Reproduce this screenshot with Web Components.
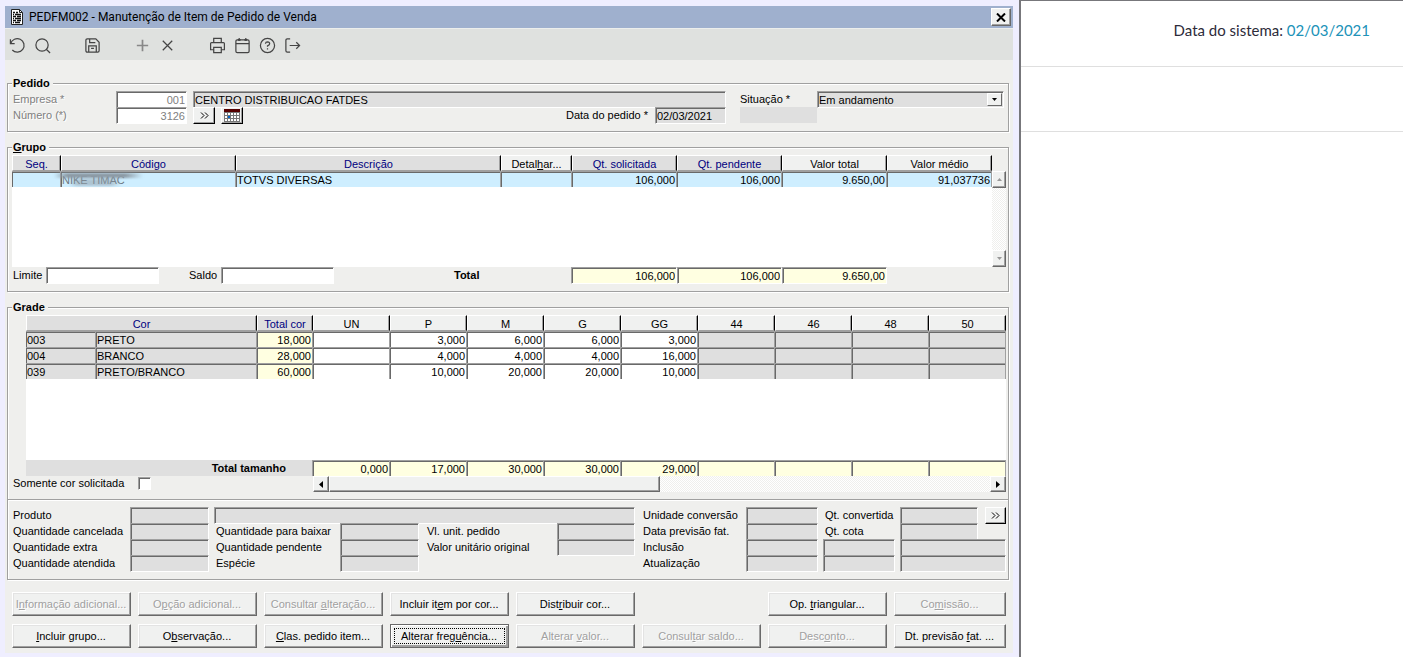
<!DOCTYPE html>
<html lang="pt-BR">
<head>
<meta charset="utf-8">
<title>PEDFM002 - Manutenção de Item de Pedido de Venda</title>
<style>
  :root {
    --frame: #efeeff;
    --face: #efefed;
    --field: #dfdfdf;
    --total: #ffffe1;
    --shadow: #a0a0a0;
    --dark: #696969;
    --navy: #000080;
  }

  body {
    margin: 0;
    min-height: 100vh;
    display: grid;
    grid-template-columns: minmax(0, 1fr) 382px;
    background: #fff;
    color: #000;
    font: 11px/16px "Liberation Sans", Arial, sans-serif;
  }
</style>
</head>
<body>
<erp-window>
  <span slot="title">PEDFM002 - Manutenção de Item de Pedido de Venda</span>
  <erp-toolbar slot="toolbar"></erp-toolbar>
  <erp-group>
    <b slot="legend">Pedido</b>
    <order-header></order-header>
  </erp-group>
  <erp-group>
    <b slot="legend"><u>G</u>rupo</b>
    <item-group-grid></item-group-grid>
  </erp-group>
  <erp-group>
    <b slot="legend">Grade</b>
    <size-grid></size-grid>
  </erp-group>
  <item-details></item-details>
  <action-bar>
    <erp-button disabled>I<u>n</u>formação adicional...</erp-button>
    <erp-button disabled>O<u>p</u>ção adicional...</erp-button>
    <erp-button disabled>Consultar <u>a</u>lteração...</erp-button>
    <erp-button>Incluir it<u>e</u>m por cor...</erp-button>
    <erp-button>Dist<u>r</u>ibuir cor...</erp-button>
    <span></span>
    <erp-button>Op. <u>t</u>riangular...</erp-button>
    <erp-button disabled>Co<u>m</u>issão...</erp-button>
    <erp-button><u>I</u>ncluir grupo...</erp-button>
    <erp-button>O<u>b</u>servação...</erp-button>
    <erp-button><u>C</u>las. pedido item...</erp-button>
    <erp-button default>Alterar freg<u>u</u>ência...</erp-button>
    <erp-button disabled>Alterar <u>v</u>alor...</erp-button>
    <erp-button disabled>Consul<u>t</u>ar saldo...</erp-button>
    <erp-button disabled>Desc<u>o</u>nto...</erp-button>
    <erp-button>Dt. previsão <u>f</u>at. ...</erp-button>
  </action-bar>
</erp-window>
<system-panel>02/03/2021</system-panel>

<script>
// form controls shared by every panel
const controls = `
  *, *::before { box-sizing: border-box; }
  label, .label { white-space: nowrap; }
  input[type=text], select {
    display: block;
    width: 100%;
    min-width: 0;
    height: 17px;
    margin: 0 0 -1px;
    padding: 1px 2px 0 1px;
    border: 1px solid;
    border-color: var(--shadow) #fff #fff var(--shadow);
    border-radius: 0;
    box-shadow: inset 1px 1px var(--dark);
    background: var(--field);
    color: inherit;
    font: inherit;
    outline: 0;
  }
  input.edit { background: #fff; }
  input.total { background: var(--total); }
  input.num { text-align: right; padding-right: 1px; }
  .small {
    height: 17px;
    margin: 0;
    padding: 0;
    border: 1px solid;
    border-color: #fff #000 #000 #fff;
    box-shadow: inset -1px -1px var(--shadow);
    background: #f0f1f0;
    display: flex;
    align-items: center;
    justify-content: center;
  }
  svg { display: block; }
`;

const grid = `
  table {
    width: 100%;
    border-collapse: separate;
    border-spacing: 0;
    table-layout: fixed;
  }
  th, td { height: 16px; padding: 0; white-space: nowrap; line-height: 14px; overflow: hidden; }
  th {
    padding-top: 2px;
    line-height: 12px;
    font-weight: normal;
    background: #f0f1f0;
    border: 1px solid;
    border-color: #fff #000 var(--shadow) #fff;
    box-shadow: inset -1px 0 var(--shadow);
  }
  th.key { background: var(--field); color: var(--navy); }
  td {
    padding: 1px 1px 0 1px;
    border: solid;
    border-width: 1px 1px 0 0;
    border-color: var(--shadow);
    box-shadow: inset 1px 1px var(--dark);
  }
  td.num { text-align: right; }
  .track { background: repeating-conic-gradient(#efefed 0 25%, #fff 0 50%) 0 0 / 2px 2px; display: flex; justify-content: space-between; }
  .arrow {
    display: flex;
    align-items: center;
    justify-content: center;
    padding: 0;
    border: 1px solid;
    border-color: #fff var(--dark) var(--dark) #fff;
    box-shadow: inset -1px -1px var(--shadow);
    background: #f0f1f0;
  }
`;

const chevrons = `<svg width="9" height="7" viewBox="0 0 9 7" fill="none" stroke="#000"><path d="M1 .5l3 3-3 3M5 .5l3 3-3 3"/></svg>`;

class BaseElement extends HTMLElement {
  constructor() {
    super();
    this.attachShadow({ mode: 'open' });
  }

  connectedCallback() {
    this.shadowRoot.innerHTML = this.render();
  }
}

class ErpWindow extends BaseElement {
  render() {
    return `
<style>
  :host {
    display: block;
    box-sizing: border-box;
    min-width: 0;
    padding: 6px 6px 4px 5px;
    background: var(--frame);
    border-right: 2px solid #77777b;
  }
  header {
    display: flex;
    align-items: center;
    gap: 5px;
    height: 22px;
    padding: 0 2px 0 5px;
    background: #9fb0ce;
    font: 12px/22px Roboto, sans-serif;
  }
  ::slotted([slot=title]) { flex: 1; }
  button {
    width: 20px;
    height: 18px;
    padding: 0;
    display: flex;
    align-items: center;
    justify-content: center;
    background: #f0f1f0;
    border: 1px solid;
    border-color: #fff var(--dark) var(--dark) #fff;
    box-shadow: inset -1px -1px var(--shadow);
  }
  main {
    display: flex;
    flex-direction: column;
    gap: 9px;
    padding: 17px 4px 5px 2px;
    background: var(--face);
  }
</style>
<header>
  <svg width="14" height="16" viewBox="0 0 14 16">
    <path d="M1.500 .5h8l3 3v12h-11z" fill="#fff" stroke="#222"/>
    <path d="M9.500 .5v3h3" fill="none" stroke="#222"/>
    <path d="M3 3.500h2M6 3.500h2M3 5.500h1M5 5.500h6M3 7.500h3M7 7.500h4M3 9.500h1M5 9.500h6M3 11.500h3M7 11.500h4M3 13.500h1M5 13.500h5" stroke="#111" stroke-width="1.300"/>
  </svg>
  <slot name="title"></slot>
  <button aria-label="Fechar"><svg width="10" height="9" viewBox="0 0 10 9"><path d="M1 .5l8 8M9 .5l-8 8" stroke="#000" stroke-width="2"/></svg></button>
</header>
<slot name="toolbar"></slot>
<main><slot></slot></main>`;
  }
}

class ErpToolbar extends BaseElement {
  render() {
    // null leaves an empty slot between the icon groups
    const icons = [
      ['Desfazer', '<path d="M1.500 2.500v4.500h4.500M1.800 7a7.200 7.200 0 1 1 1.700 6.800"/>'],
      ['Pesquisar', '<circle cx="8.500" cy="8.500" r="6.500"/><path d="M13 13l4 4"/>'],
      null,
      ['Salvar', '<path d="M2 3.500q0-1.500 1.500-1.500h9l3.500 3.500v9q0 1.500-1.500 1.500h-11q-1.500 0-1.500-1.500zM5 16v-6.500h8v6.500M6 2v4h6M7.500 12h3"/>'],
      null,
      ['Incluir', '<path d="M9 3v12M3 9h12" stroke="#888" stroke-width="1.800"/>'],
      ['Excluir', '<path d="M4 4l10 10M14 4l-10 10"/>'],
      null,
      ['Imprimir', '<path d="M5 6v-4.500h8v4.500M5 13.500h-3.300v-6.500q0-1 1-1h12.600q1 0 1 1v6.500h-3.300M5 11h8v5.500h-8z"/>'],
      ['Calendário', '<rect x="2" y="3" width="14" height="13.500" rx="1.500"/><path d="M2 7h14M5.500 1v3M12.500 1v3"/><path d="M4 3h3M11 3h3" stroke-width="2"/>'],
      ['Ajuda', '<circle cx="9" cy="9" r="7.500"/><path d="M6.800 7.200q.2-2 2.300-2 2.200.1 2.200 2 0 1.300-2.300 2.200v1M9 12v1.300"/>'],
      ['Sair', '<path d="M6.500 2h-3q-1.500 0-1.500 1.500v11q0 1.500 1.500 1.500h3M6 9h10.500M13 5.500l3.500 3.500-3.500 3.500"/>']
    ];
    return `
<style>
  :host {
    display: flex;
    box-sizing: border-box;
    height: 32px;
    padding-top: 2px;
    border-top: 1px solid #eceeec;
    background: #dfe1df;
  }
  button, span {
    box-sizing: border-box;
    width: 25px;
    padding: 0;
    border: 0;
    background: none;
    display: flex;
    align-items: center;
    justify-content: center;
  }
  svg { flex: none; fill: none; stroke: #444; stroke-width: 1.3; }
</style>
${icons.map(icon => icon
  ? `<button aria-label="${icon[0]}"><svg width="17" height="17" viewBox="0 0 18 18">${icon[1]}</svg></button>`
  : '<span></span>').join('')}`;
  }
}

class ErpGroup extends BaseElement {
  render() {
    return `
<style>
  :host { display: block; }
  fieldset {
    min-width: 0;
    margin: 0;
    padding: 1px 2px 7px 4px;
    border: 1px solid var(--shadow);
    box-shadow: 1px 1px #fff, inset 1px 1px #fff;
  }
  legend {
    padding: 0 3px 0 1px;
    background: var(--face);
    line-height: 13px;
  }
</style>
<fieldset>
  <legend><slot name="legend"></slot></legend>
  <slot></slot>
</fieldset>`;
  }
}

class OrderHeader extends BaseElement {
  render() {
    return `
<style>
  ${controls}
  :host {
    display: grid;
    grid-template-columns: 103px 71px 6px 22px 6px 22px 1fr 89px 71px 14px 77px 187px;
    grid-auto-rows: 16px;
    padding: 0 2px 1px 1px;
  }
  label.off { color: #808080; text-shadow: 1px 1px #fff; }
  input[type=text].off { color: #808080; }
  .name { grid-column: 4 / 10; }
  .state { position: relative; }
  .state i {
    position: absolute;
    right: 2px;
    top: 2px;
    width: 15px;
    height: 13px;
    display: flex;
    align-items: center;
    justify-content: center;
    border: 1px solid;
    border-color: #fff var(--dark) var(--dark) #fff;
    background: #f0f1f0;
    pointer-events: none;
  }
  select { appearance: none; padding: 0 2px 0 1px; }
  .blank { background: var(--field); }
</style>
<label class="off" for="company">Empresa *</label>
<input id="company" class="edit num off" type="text" value="001">
<input class="name" type="text" value="CENTRO DISTRIBUICAO FATDES" aria-label="Nome da empresa" readonly>
<label for="status" style="grid-column: 11">Situação *</label>
<div class="state">
  <select id="status"><option>Em andamento</option></select>
  <i><svg width="5" height="3" viewBox="0 0 5 3"><path d="M0 0h5l-2.500 3z"/></svg></i>
</div>
<label class="off" for="number">Número (*)</label>
<input id="number" class="edit num off" type="text" value="3126">
<button class="small" style="grid-column: 4" aria-label="Buscar pedido">${chevrons}</button>
<button class="small" style="grid-column: 6" aria-label="Calendário">
  <svg width="16" height="13" viewBox="0 0 16 13">
    <path d="M0 0h16v13h-16z" fill="#777"/><path d="M0 0h16v3h-16z" fill="#500"/>
    <path d="M1 4h2v2h-2zM4 4h2v2h-2zM7 4h2v2h-2zM10 4h2v2h-2zM13 4h2v2h-2zM1 7h2v2h-2zM7 7h2v2h-2zM10 7h2v2h-2zM13 7h2v2h-2zM1 10h2v2h-2zM4 10h2v2h-2zM7 10h2v2h-2zM10 10h2v2h-2zM13 10h2v2h-2z" fill="#fff"/>
    <path d="M4 7h2v2h-2z" fill="#06c"/>
  </svg>
</button>
<label for="date" style="grid-column: 8">Data do pedido *</label>
<input id="date" type="text" value="02/03/2021" readonly>
<span class="blank" style="grid-column: 11"></span>`;
  }
}

class ItemGroupGrid extends BaseElement {
  render() {
    return `
<style>
  ${controls}
  ${grid}
  :host { display: block; }
  .area {
    display: grid;
    grid-template-columns: 1fr 14px;
    height: 112px;
    background: linear-gradient(var(--face) 16px, #fff 0);
  }
  .track { margin-top: 16px; flex-direction: column; }
  .arrow { height: 17px; }
  td { background: #ceeeff; }
  /* censored code */
  .code { position: relative; overflow: visible; color: #6d7983; }
  .code span {
    position: absolute;
    left: -7px;
    top: 1px;
    width: 89px;
    height: 5px;
    background: linear-gradient(90deg, #8d9ba600, #8d9ba6 15%, #8d9ba6 80%, #8d9ba600);
    filter: blur(1px);
  }
  .code span + span { left: 8px; top: 7px; width: 52px; height: 7px; opacity: .5; }
  footer {
    display: grid;
    grid-template-columns: 34px 113px 29px 33px 113px 1fr 117px 106px 105px 105px 119px;
    height: 17px;
  }
  label { padding-left: 1px; }
</style>
<div class="area">
  <div>
    <table>
      <colgroup>
        <col style="width: 49px"><col style="width: 175px"><col><col style="width: 71px">
        <col style="width: 105px"><col style="width: 105px"><col style="width: 105px"><col style="width: 105px">
      </colgroup>
      <tr>
        <th class="key">Seq.</th><th class="key">Código</th><th class="key">Descrição</th><th>Detal<u>h</u>ar...</th>
        <th class="key">Qt. solicitada</th><th class="key">Qt. pendente</th><th>Valor total</th><th>Valor médio</th>
      </tr>
      <tr>
        <td></td><td class="code">NIKE TIMAC<span></span><span></span></td><td>TOTVS DIVERSAS</td><td></td>
        <td class="num">106,000</td><td class="num">106,000</td><td class="num">9.650,00</td><td class="num">91,037736</td>
      </tr>
    </table>
  </div>
  <div class="track">
    <button class="arrow" aria-label="Subir"><svg width="5" height="3"><path d="M0 3h5l-2.500-3z" fill="#999"/></svg></button>
    <button class="arrow" aria-label="Descer"><svg width="5" height="3"><path d="M0 0h5l-2.500 3z" fill="#999"/></svg></button>
  </div>
</div>
<footer>
  <label for="limit">Limite</label>
  <input id="limit" class="edit" type="text">
  <label for="balance" style="grid-column: 4">Saldo</label>
  <input id="balance" class="edit" type="text">
  <b class="label" style="grid-column: 7">Total</b>
  <input class="total num" type="text" value="106,000" aria-label="Total solicitado" readonly>
  <input class="total num" type="text" value="106,000" aria-label="Total pendente" readonly>
  <input class="total num" type="text" value="9.650,00" aria-label="Valor total" readonly>
</footer>`;
  }
}

class SizeGrid extends BaseElement {
  render() {
    const sizes = ['UN', 'P', 'M', 'G', 'GG', '44', '46', '48', '50'];
    const rows = [
      ['003', 'PRETO', '18,000', ['', '3,000', '6,000', '6,000', '3,000']],
      ['004', 'BRANCO', '28,000', ['', '4,000', '4,000', '4,000', '16,000']],
      ['039', 'PRETO/BRANCO', '60,000', ['', '10,000', '20,000', '20,000', '10,000']]
    ];
    const totals = ['0,000', '17,000', '30,000', '30,000', '29,000', '', '', '', ''];
    const cols = `<colgroup><col style="width: 70px"><col><col style="width: 56px">${'<col style="width: 77px">'.repeat(9)}</colgroup>`;
    return `
<style>
  ${controls}
  ${grid}
  :host { display: block; }
  .area { height: 145px; margin-left: 14px; background: #fff; }
  .sums { margin-left: 14px; }
  td { background: var(--field); }
  td.open { background: #fff; }
  td.sum { background: var(--total); }
  td.caption {
    border-width: 0 1px 0 0;
    box-shadow: none;
    padding: 0 26px 0 0;
    text-align: right;
    font-weight: bold;
  }
  footer { display: flex; height: 16px; line-height: 15px; }
  footer label { width: 126px; padding-left: 1px; }
  input[type=checkbox] {
    appearance: none;
    width: 13px;
    height: 13px;
    margin: 1px 0 0;
    border: 1px solid;
    border-color: var(--shadow) #fff #fff var(--shadow);
    box-shadow: inset 1px 1px var(--dark);
    background: #fff;
  }
  .track { flex: 0 0 693px; margin-left: auto; justify-content: flex-start; }
  .arrow { width: 16px; }
  .thumb { width: 331px; }
  .arrow:last-child { margin-left: auto; }
</style>
<div class="area">
  <table>
    ${cols}
    <tr><th class="key" colspan="2">Cor</th><th class="key">Total cor</th>${sizes.map(size => `<th>${size}</th>`).join('')}</tr>
    ${rows.map(([code, name, total, values]) => `
    <tr>
      <td>${code}</td><td>${name}</td><td class="num sum">${total}</td>
      ${sizes.map((size, i) => `<td class="num ${i < values.length ? 'open' : ''}">${values[i] || ''}</td>`).join('')}
    </tr>`).join('')}
  </table>
</div>
<div class="sums">
  <table>
    ${cols}
    <tr><td class="caption" colspan="3">Total tamanho</td>${totals.map(total => `<td class="num sum">${total}</td>`).join('')}</tr>
  </table>
</div>
<footer>
  <label for="requested">Somente cor solicitada</label>
  <input id="requested" type="checkbox">
  <div class="track">
    <button class="arrow" aria-label="Esquerda"><svg width="4" height="7"><path d="M4 0v7l-4-3.500z"/></svg></button>
    <div class="arrow thumb"></div>
    <button class="arrow" aria-label="Direita"><svg width="4" height="7"><path d="M0 0v7l4-3.500z"/></svg></button>
  </div>
</footer>`;
  }
}

class ItemDetails extends BaseElement {
  // label + readonly box, placed by grid line
  field(id, text, row, labelCol, col) {
    return `<label for="${id}" style="grid-area: ${row} / ${labelCol}">${text}</label>
<input id="${id}" type="text" style="grid-area: ${row} / ${col}" readonly>`;
  }

  box(name, row, from, to) {
    return `<input type="text" aria-label="${name}" style="grid-area: ${row} / ${from} / auto / ${to}" readonly>`;
  }

  render() {
    return `
<style>
  ${controls}
  :host {
    display: grid;
    grid-template-columns: 119px 79px 5px 126px 79px 8px 130px 1fr 8px 103px 72px 5px 72px 5px 78px 7px 21px;
    grid-auto-rows: 16px;
    margin-top: -9px;
    padding: 7px 2px 8px 3px;
    border: 1px solid var(--shadow);
    border-top: 0;
    box-shadow: 1px 1px #fff, inset 1px 1px #fff;
  }
  label { padding-left: 2px; }
  label.flush { padding-left: 0; }
</style>
${this.field('product', 'Produto', 1, 1, 2)}
${this.box('Descrição do produto', 1, 4, 9)}
${this.field('cancelled', 'Quantidade cancelada', 2, 1, 2)}
${this.field('extra', 'Quantidade extra', 3, 1, 2)}
${this.field('served', 'Quantidade atendida', 4, 1, 2)}
${this.field('towrite', 'Quantidade para baixar', 2, 4, 5)}
${this.field('pending', 'Quantidade pendente', 3, 4, 5)}
${this.field('kind', 'Espécie', 4, 4, 5)}
${this.field('unit', 'Vl. unit. pedido', 2, 7, 8).replace('<label', '<label class="flush"')}
${this.field('original', 'Valor unitário original', 3, 7, 8).replace('<label', '<label class="flush"')}
${this.field('convunit', 'Unidade conversão', 1, 10, 11).replace('<label', '<label class="flush"')}
${this.field('forecast', 'Data previsão fat.', 2, 10, 11).replace('<label', '<label class="flush"')}
${this.field('added', 'Inclusão', 3, 10, 11).replace('<label', '<label class="flush"')}
${this.field('updated', 'Atualização', 4, 10, 11).replace('<label', '<label class="flush"')}
${this.field('converted', 'Qt. convertida', 1, 13, 15)}
${this.field('quota', 'Qt. cota', 2, 13, 15)}
${this.box('Hora da inclusão', 3, 13, 14)}
${this.box('Hora da atualização', 4, 13, 14)}
${this.box('Usuário da inclusão', 3, 15, 18)}
${this.box('Usuário da atualização', 4, 15, 18)}
<button class="small" style="grid-area: 1 / 17" aria-label="Mais detalhes">${chevrons}</button>`;
  }
}

class ActionBar extends BaseElement {
  render() {
    return `
<style>
  :host {
    display: grid;
    grid-template-columns: repeat(7, minmax(0, 119fr)) minmax(0, 112fr);
    gap: 8px 7px;
    margin-top: 3px;
    padding: 0 3px 0 5px;
  }
</style>
<slot></slot>`;
  }
}

class ErpButton extends BaseElement {
  render() {
    return `
<style>
  :host { display: block; }
  button {
    width: 100%;
    height: 24px;
    padding: 0 1px 1px 0;
    border: 1px solid;
    border-color: #fff var(--dark) var(--dark) #fff;
    box-shadow: inset -1px -1px var(--shadow), inset 1px 1px #e3e3e3;
    background: #f0f1f0;
    color: inherit;
    font: inherit;
    white-space: nowrap;
  }
  button:disabled { color: #a0a0a0; text-shadow: 1px 1px #fff; }
  :host([default]) button {
    border-color: var(--dark);
    box-shadow: inset 1px 1px #fff, inset -2px -2px var(--shadow);
    outline: 1px dotted #000;
    outline-offset: -5px;
  }
</style>
<button ${this.hasAttribute('disabled') ? 'disabled' : ''}><slot></slot></button>`;
  }
}

class SystemPanel extends BaseElement {
  render() {
    return `
<style>
  :host {
    display: block;
    border-top: 1px solid #77777b;
    color: #2d2b3a;
    font: 15px/24px Lato, sans-serif;
  }
  header {
    height: 66px;
    box-sizing: border-box;
    padding: 17px 33px 0 0;
    text-align: right;
  }
  header, div { border-bottom: 1px solid #dfdfdf; }
  div { height: 65px; box-sizing: border-box; }
  span { color: #2092b8; }
</style>
<header>Data do sistema: <span><slot></slot></span></header>
<div></div>`;
  }
}

customElements.define('erp-window', ErpWindow);
customElements.define('erp-toolbar', ErpToolbar);
customElements.define('erp-group', ErpGroup);
customElements.define('order-header', OrderHeader);
customElements.define('item-group-grid', ItemGroupGrid);
customElements.define('size-grid', SizeGrid);
customElements.define('item-details', ItemDetails);
customElements.define('action-bar', ActionBar);
customElements.define('erp-button', ErpButton);
customElements.define('system-panel', SystemPanel);
</script>
</body>
</html>
